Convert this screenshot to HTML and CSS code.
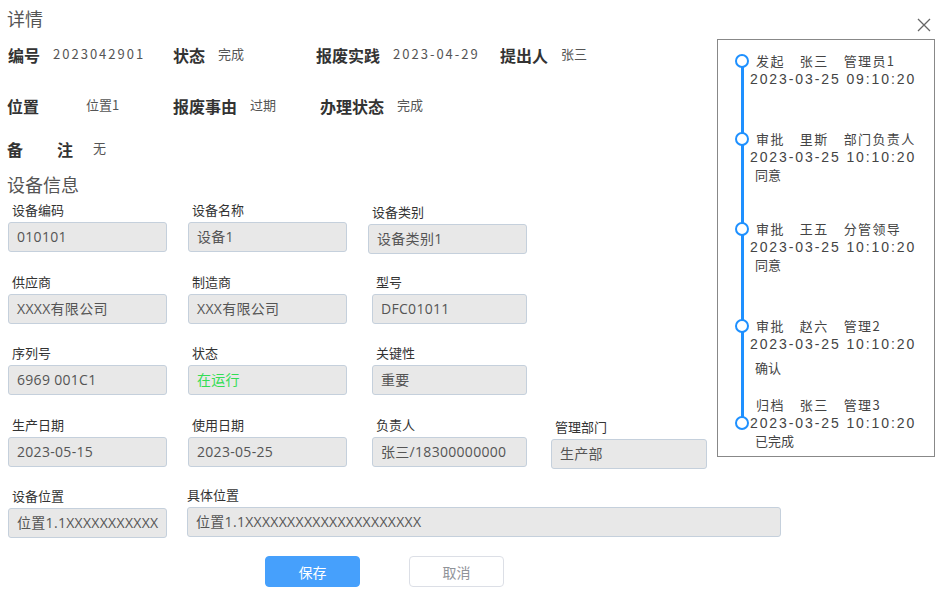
FILE: index.html
```html
<!DOCTYPE html>
<html lang="zh-CN">
<head>
  <meta charset="UTF-8" />
  <meta name="viewport" content="width=device-width, initial-scale=1.0"/>
  <title>详情</title>
  <link rel="stylesheet" href="styles.css">
</head>
<body>

  <div class="dialog-head">
    <div class="dialog-title">详情</div>
    <span class="dialog-close">
      <svg width="14" height="14" viewBox="0 0 14 14"><path d="M1 1L13 13M13 1L1 13" stroke="#666" stroke-width="1.3" fill="none"/></svg>
    </span>
  </div>

  <div class="dialog-body">
    <div class="main">
      <div class="info-row">
        <div class="info-item w165"><span class="info-label">编号</span><span class="info-value num">2023042901</span></div>
        <div class="info-item w143"><span class="info-label">状态</span><span class="info-value">完成</span></div>
        <div class="info-item w184"><span class="info-label">报废实践</span><span class="info-value num">2023-04-29</span></div>
        <div class="info-item"><span class="info-label">提出人</span><span class="info-value">张三</span></div>
      </div>
      <div class="info-row row2">
        <div class="info-item w166"><span class="info-label wide">位置</span><span class="info-value">位置1</span></div>
        <div class="info-item w147"><span class="info-label">报废事由</span><span class="info-value">过期</span></div>
        <div class="info-item"><span class="info-label">办理状态</span><span class="info-value">完成</span></div>
      </div>
      <div class="info-row row3">
        <div class="info-item"><span class="info-label spread"><span>备</span><span>注</span></span><span class="info-value">无</span></div>
      </div>

      <div class="section-title">设备信息</div>

      <div class="fields">
        <div class="field"><div class="field-label">设备编码</div><div class="field-input">010101</div></div>
        <div class="field"><div class="field-label">设备名称</div><div class="field-input">设备1</div></div>
        <div class="field low"><div class="field-label">设备类别</div><div class="field-input">设备类别1</div></div>
        <div class="field empty"></div>

        <div class="field"><div class="field-label">供应商</div><div class="field-input">XXXX有限公司</div></div>
        <div class="field"><div class="field-label">制造商</div><div class="field-input">XXX有限公司</div></div>
        <div class="field shift"><div class="field-label">型号</div><div class="field-input">DFC01011</div></div>
        <div class="field empty"></div>

        <div class="field"><div class="field-label">序列号</div><div class="field-input">6969 001C1</div></div>
        <div class="field"><div class="field-label">状态</div><div class="field-input running">在运行</div></div>
        <div class="field shift"><div class="field-label">关键性</div><div class="field-input">重要</div></div>
        <div class="field empty"></div>

        <div class="field"><div class="field-label">生产日期</div><div class="field-input">2023-05-15</div></div>
        <div class="field"><div class="field-label">使用日期</div><div class="field-input">2023-05-25</div></div>
        <div class="field shift"><div class="field-label">负责人</div><div class="field-input">张三/18300000000</div></div>
        <div class="field last-col"><div class="field-label">管理部门</div><div class="field-input">生产部</div></div>

        <div class="field"><div class="field-label">设备位置</div><div class="field-input">位置1.1XXXXXXXXXXX</div></div>
        <div class="field field-wide"><div class="field-label">具体位置</div><div class="field-input">位置1.1XXXXXXXXXXXXXXXXXXXXX</div></div>
      </div>

      <div class="actions">
        <button class="btn btn-primary">保存</button>
        <button class="btn btn-default">取消</button>
      </div>
    </div>

    <div class="aside">
      <div class="tl-line"></div>
      <div class="tl-item">
        <span class="tl-dot"></span>
        <div class="tl-head"><span>发起</span><span>张三</span><span>管理员1</span></div>
        <div class="tl-time">2023-03-25 09:10:20</div>
      </div>
      <div class="tl-item">
        <span class="tl-dot"></span>
        <div class="tl-head"><span>审批</span><span>里斯</span><span>部门负责人</span></div>
        <div class="tl-time">2023-03-25 10:10:20</div>
        <div class="tl-note">同意</div>
      </div>
      <div class="tl-item">
        <span class="tl-dot"></span>
        <div class="tl-head"><span>审批</span><span>王五</span><span>分管领导</span></div>
        <div class="tl-time">2023-03-25 10:10:20</div>
        <div class="tl-note">同意</div>
      </div>
      <div class="tl-item">
        <span class="tl-dot"></span>
        <div class="tl-head"><span>审批</span><span>赵六</span><span>管理2</span></div>
        <div class="tl-time">2023-03-25 10:10:20</div>
        <div class="tl-note">确认</div>
      </div>
      <div class="tl-item last">
        <span class="tl-dot"></span>
        <div class="tl-head"><span>归档</span><span>张三</span><span>管理3</span></div>
        <div class="tl-time">2023-03-25 10:10:20</div>
        <div class="tl-note">已完成</div>
      </div>
    </div>
  </div>

</body>
</html>
```

FILE: styles.css
```css
html, body {
  margin: 0;
  padding: 0;
  background: #fff;
  font-family: "Noto Sans CJK SC", "Noto Sans", sans-serif;
  color: #444;
}
.dialog-head {
  height: 39px;
  display: flex;
  justify-content: space-between;
  align-items: flex-start;
  padding: 0 21px 0 7px;
}
.dialog-title {
  font-size: 18px;
  line-height: 24px;
  padding-top: 6px;
  color: #555;
}
.dialog-close {
  padding-top: 13px;
}
.dialog-body {
  display: flex;
  align-items: flex-start;
}
.main {
  width: 709px;
  padding: 4px 0 0 8px;
}
.info-row {
  display: flex;
  align-items: center;
  height: 24px;
}
.row2 {
  margin-top: 27px;
  margin-left: -1px;
}
.row3 {
  margin-top: 19px;
  margin-left: -1px;
}
.info-item {
  display: flex;
  align-items: center;
}
.w165 { width: 165px; }
.w143 { width: 143px; }
.w184 { width: 184px; }
.w166 { width: 166px; }
.w147 { width: 147px; }
.info-label {
  font-size: 16px;
  font-weight: bold;
  color: #333;
  margin-right: 13px;
}
.info-label.wide {
  width: 79px;
  margin-right: 0;
}
.info-label.spread {
  width: 66px;
  display: flex;
  justify-content: space-between;
  margin-right: 20px;
}
.info-value {
  font-size: 13px;
  color: #555;
  position: relative;
  top: -2px;
}
.info-value.num {
  letter-spacing: 2px;
}
.section-title {
  margin-top: 11px;
  font-size: 18px;
  line-height: 24px;
  color: #555;
  margin-left: -1px;
}
.fields {
  margin-top: 5px;
  display: grid;
  grid-template-columns: repeat(4, 159px);
  column-gap: 21px;
  row-gap: 20.5px;
}
.field-label {
  font-size: 13px;
  line-height: 18px;
  color: #333;
  padding-left: 4px;
}
.field-input {
  margin-top: 3px;
  height: 28px;
  line-height: 28px;
  border: 1px solid #c5d0dc;
  border-radius: 3px;
  background: #e8e8e8;
  padding-left: 8px;
  font-family: "Open Sans", "Noto Sans CJK SC", sans-serif;
  font-size: 14px;
  letter-spacing: 0.3px;
  color: #555;
  white-space: nowrap;
  overflow: hidden;
}
.field-input.running {
  color: #33dd55;
}
.field.low {
  margin-top: 2px;
  margin-bottom: -2px;
}
.field.shift {
  margin-left: 4px;
}
.field.last-col {
  margin-left: 3px;
  margin-top: 2px;
  margin-bottom: -2px;
}
.field-wide {
  grid-column: 2 / span 3;
  width: 594px;
  margin-left: -1px;
  margin-top: -1px;
}
.field-wide .field-label {
  padding-left: 0;
}
.actions {
  margin-top: 18px;
  padding-left: 257px;
  display: flex;
  gap: 49px;
}
.btn {
  width: 95px;
  height: 31px;
  border-radius: 4px;
  font-size: 14px;
  font-family: inherit;
  cursor: pointer;
}
.btn-primary {
  background: #46a0fc;
  border: 1px solid #46a0fc;
  color: #fff;
}
.btn-default {
  background: #fff;
  border: 1px solid #dcdfe6;
  color: #909399;
}
.aside {
  position: relative;
  width: 218px;
  height: 418px;
  border: 1px solid #888;
  padding-top: 12px;
  box-sizing: border-box;
}
.tl-line {
  position: absolute;
  left: 23px;
  top: 20px;
  height: 364px;
  width: 3px;
  background: #1e90ff;
}
.tl-item {
  position: relative;
  padding-left: 32px;
  font-size: 13px;
  line-height: 18px;
  color: #444;
}
.tl-item:nth-child(2) { margin-bottom: 42px; }
.tl-item:nth-child(3) { margin-bottom: 36px; }
.tl-item:nth-child(4) { margin-bottom: 43px; }
.tl-item:nth-child(5) { margin-bottom: 19px; }
.tl-item:nth-child(5) .tl-note { margin-top: 6px; }
.tl-dot {
  position: absolute;
  left: 17px;
  top: 2px;
  width: 10px;
  height: 10px;
  border: 2.5px solid #1e90ff;
  border-radius: 50%;
  background: #fff;
}
.tl-item.last .tl-dot {
  top: 20px;
}
.tl-head {
  padding-left: 6px;
  display: flex;
  gap: 15px;
  letter-spacing: 1.4px;
}
.tl-time {
  font-family: "Liberation Sans", "Noto Sans CJK SC", sans-serif;
  font-size: 14px;
  line-height: 18px;
  letter-spacing: 1.9px;
}
.tl-note {
  padding-left: 5px;
}
```
